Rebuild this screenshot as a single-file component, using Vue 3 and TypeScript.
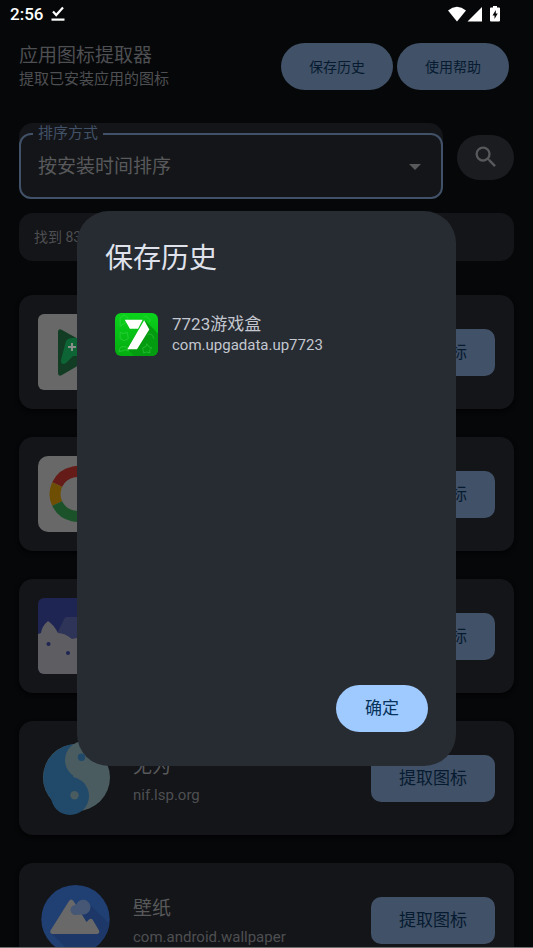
<script setup lang="ts">
import { ref } from 'vue'

interface AppEntry {
  id: number
  name?: string
  pkg?: string
  icon: 'games' | 'google' | 'cat' | 'taiji' | 'wallpaper'
}

const apps: AppEntry[] = [
  { id: 1, icon: 'games' },
  { id: 2, icon: 'google' },
  { id: 3, icon: 'cat' },
  { id: 4, name: '无为', pkg: 'nif.lsp.org', icon: 'taiji' },
  { id: 5, name: '壁纸', pkg: 'com.android.wallpaper', icon: 'wallpaper' },
]

const history = [{ name: '7723游戏盒', pkg: 'com.upgadata.up7723' }]

const sort = ref('time')
const dialogOpen = ref(true)
</script>

<template>
  <div class="screen">
    <div class="status">
      <span class="clock">2:56</span>
      <svg class="done" viewBox="0 0 14 16" aria-hidden="true">
        <path d="M2 5.5 5.2 9 12 1.5" fill="none" stroke="#fff" stroke-width="2.2" />
        <path d="M.5 12.5h13v2.2H.5z" fill="#fff" />
      </svg>
      <svg class="signals" viewBox="0 0 54 16" aria-hidden="true">
        <path d="M1 4.4Q10 -3 19 4.4L10 15.5z" fill="#fff" />
        <path d="M35 1v14.5H20.5z" fill="#fff" />
        <path d="M46 0h4v1.5h2a1 1 0 0 1 1 1v12a1 1 0 0 1-1 1h-8a1 1 0 0 1-1-1v-12a1 1 0 0 1 1-1h2z" fill="#fff" />
        <path d="M48.8 4 45.5 9.4h2V13l3.200-5.4h-1.900z" fill="#060709" />
      </svg>
    </div>

    <header class="header">
      <div class="heading">
        <h1>应用图标提取器</h1>
        <p>提取已安装应用的图标</p>
      </div>
      <div class="actions">
        <button class="pill" type="button" @click="dialogOpen = true">保存历史</button>
        <button class="pill" type="button">使用帮助</button>
      </div>
    </header>

    <main>
      <div class="filter">
        <div class="sort">
          <fieldset>
            <legend><label for="sort">排序方式</label></legend>
            <div class="select-row">
              <select id="sort" v-model="sort">
                <option value="time">按安装时间排序</option>
              </select>
              <svg viewBox="0 0 12 6" aria-hidden="true"><path d="M0 0h12L6 6z" fill="#58595b" /></svg>
            </div>
          </fieldset>
        </div>
        <button class="search" type="button" aria-label="搜索">
          <svg viewBox="0 0 24 24" aria-hidden="true">
            <path
              fill="#58595b"
              d="M15.5 14h-.79l-.28-.27A6.47 6.47 0 0 0 16 9.5 6.5 6.5 0 1 0 9.5 16c1.61 0 3.09-.59 4.23-1.57l.27.28v.79l5 4.99L20.49 19zm-6 0C7.01 14 5 11.99 5 9.5S7.01 5 9.5 5 14 7.01 14 9.5 11.99 14 9.5 14z"
            />
          </svg>
        </button>
      </div>

      <p class="found">找到 83</p>

      <ul class="apps">
        <li v-for="app in apps" :key="app.id" class="card">
          <svg v-if="app.icon === 'games'" class="icon" viewBox="0 0 76 76" aria-hidden="true">
            <rect width="76" height="76" rx="6" fill="#686868" />
            <path d="M20 18q0-4 4-2l36 20q3 2 0 4L24 61q-4 2-4-2z" fill="#123d24" />
            <path d="M28 27q2-3 6-3h16q4 0 6 4l4 18q0 6-5 4l-8-8H35l-7 7q-5 3-5-3z" fill="#0d6536" />
            <path d="M30 33h8M34 29v8" stroke="#8b8f8c" stroke-width="2" />
          </svg>
          <svg v-else-if="app.icon === 'google'" class="icon" viewBox="0 0 76 76" aria-hidden="true">
            <rect width="76" height="76" rx="10" fill="#686868" />
            <g fill="none" stroke-width="11">
              <path d="M19.2 28.5A22.500 22.500 0 0 1 55.500 22" stroke="#651c18" />
              <path d="M19.2 47.5A22.500 22.500 0 0 1 19.2 28.5" stroke="#6d4e03" />
              <path d="M19.2 47.5A22.500 22.500 0 0 0 54 55" stroke="#1c5229" />
              <path d="M54 55a22 22 0 0 0 8-17H40" stroke="#1b3566" />
            </g>
          </svg>
          <svg v-else-if="app.icon === 'cat'" class="icon" viewBox="0 0 76 76" aria-hidden="true">
            <clipPath id="cat-clip"><rect width="76" height="76" rx="6" /></clipPath>
            <g clip-path="url(#cat-clip)">
              <path d="M0 0h76v76H0z" fill="#1f2553" />
              <path d="M18 38 26 21q1-2 3-2h47v57H18z" fill="#2e3358" />
              <path d="M0 36l3-1q1-7 7-12 6 4 10 12 7 0 14 6l5-1h37v36H0z" fill="#5e5d62" />
              <circle cx="10.500" cy="46" r="2" fill="#1f2553" />
              <circle cx="30" cy="55" r="2" fill="#1f2553" />
            </g>
          </svg>
          <svg v-else-if="app.icon === 'taiji'" class="icon" viewBox="0 0 76 76" aria-hidden="true">
            <circle cx="38.500" cy="37.500" r="33.500" fill="#4a5c60" />
            <path d="M40 4A33.500 33.500 0 0 0 14 60L32 60z" fill="#20496a" />
            <circle cx="46" cy="20" r="19" fill="#4a5c60" />
            <circle cx="32" cy="56" r="19" fill="#20496a" />
            <circle cx="43.500" cy="17.300" r="3.700" fill="#20496a" />
            <circle cx="36.500" cy="55.300" r="4.200" fill="#4a5c60" />
          </svg>
          <svg v-else class="icon" viewBox="0 0 76 76" aria-hidden="true">
            <clipPath id="wall-clip"><circle cx="37.500" cy="37.200" r="34.200" /></clipPath>
            <g clip-path="url(#wall-clip)">
              <path d="M0 0h76v76H0z" fill="#203f73" />
              <path d="M50 21 76 46v30H38L14 52z" fill="#1d3868" />
              <path d="M31 19q2-3 4.500 0l13 21 2.500-2.500q2-1.500 3.500 0l6.500 11q1 3-2 3.500H14.500q-3-.5-2-3.500z" fill="#696969" />
              <path d="M37 33a5 5 0 0 1 1-10 7.400 7.400 0 1 1 8 9.500z" fill="#455775" />
            </g>
          </svg>
          <div class="info">
            <h2 v-if="app.name">{{ app.name }}</h2>
            <p v-if="app.pkg">{{ app.pkg }}</p>
          </div>
          <button class="extract" type="button">提取图标</button>
        </li>
      </ul>
    </main>

    <div class="edge"></div>

    <div v-if="dialogOpen" class="overlay">
      <section class="dialog" role="dialog" aria-modal="true" aria-labelledby="dialog-title">
        <h2 id="dialog-title">保存历史</h2>
        <ul class="history">
          <li v-for="item in history" :key="item.pkg">
            <svg viewBox="0 0 42 42" aria-hidden="true">
              <defs>
                <linearGradient id="green" x1="0" y1="0" x2="0" y2="1">
                  <stop offset="0" stop-color="#0bd31c" />
                  <stop offset="1" stop-color="#04ac10" />
                </linearGradient>
                <clipPath id="green-clip"><rect width="42" height="42" rx="6" /></clipPath>
              </defs>
              <g clip-path="url(#green-clip)">
                <path d="M0 0h42v42H0z" fill="url(#green)" />
                <path d="M29 7 42 20v22H19l-7-7z" fill="#049b10" />
                <g fill="none" stroke="#4fdc59" stroke-width=".7" opacity=".6">
                  <path d="M5 5l4-3 4 3-2 4-6 4zM5 19l3 1 4-1 1 6-4 2-4-2zM4 38q0-6 5-5 5 0 4 4l-3-1-3 1z" />
                  <path d="M28 5q2-4 4 0 4 1 1 4M32 21q4-2 6 4M27 34l3-1 1-3 2 3 3 1-2 2v3l-3-1-3 1z" />
                </g>
                <path d="M9.500 6.500H27L22.500 15.500h-8zM28.500 7 33.500 16 21.500 35.500H12z" fill="#fff" />
              </g>
            </svg>
            <div>
              <h3>{{ item.name }}</h3>
              <p>{{ item.pkg }}</p>
            </div>
          </li>
        </ul>
        <button class="confirm" type="button" @click="dialogOpen = false">确定</button>
      </section>
    </div>
  </div>
</template>

<style>
body {
  background: #060709;
  overflow: hidden;
}
</style>

<style scoped>
* {
  box-sizing: border-box;
}

.screen {
  height: 100vh;
  overflow: hidden;
  background: #060709;
  color: #4e4f52;
  font-family: Roboto, 'Noto Sans CJK SC', sans-serif;
}

h1,
h2,
h3,
p,
ul {
  margin: 0;
  padding: 0;
  font-weight: 400;
  list-style: none;
}

button,
select {
  border: 0;
  font-family: inherit;
}

.status {
  display: flex;
  align-items: center;
  gap: 8px;
  height: 28px;
  padding: 0 32px 0 10px;
}

.clock {
  color: #fff;
  font-size: 17px;
  font-weight: 500;
  line-height: 28px;
}

.done {
  width: 14px;
  height: 16px;
}

.signals {
  width: 54px;
  height: 16px;
  margin-left: auto;
}

.header {
  display: flex;
  justify-content: space-between;
  align-items: center;
  padding: 15px 24px 0 19px;
}

h1 {
  font-size: 19px;
  line-height: 26px;
}

.heading p {
  font-size: 15px;
  line-height: 21px;
}

.actions {
  display: flex;
  gap: 4px;
}

.pill {
  height: 47px;
  padding: 0 28px 2px;
  border-radius: 24px;
  background: #415167;
  color: #061b30;
  font-size: 14px;
}

main {
  padding: 33px 19px 0;
}

.filter {
  display: flex;
  align-items: center;
  gap: 14px;
}

.sort {
  flex: 1;
  min-width: 0;
  border-radius: 14px;
  background: #141518;
}

fieldset {
  min-width: 0;
  margin: 0;
  padding: 0 12px 8px;
  border: 2px solid #415167;
  border-radius: 12px;
}

legend {
  padding: 0 5px;
  color: #415167;
  font-size: 15px;
  line-height: 21px;
}

.select-row {
  display: flex;
  align-items: center;
  padding: 0 8px 0 5px;
}

select {
  flex: 1;
  height: 45px;
  padding: 0;
  appearance: none;
  outline: 0;
  background: transparent;
  color: #58595b;
  font-size: 19px;
}

.select-row svg {
  width: 12px;
  height: 6px;
}

.search {
  display: grid;
  place-items: center;
  width: 57px;
  height: 45px;
  margin-bottom: 8px;
  padding: 0;
  border-radius: 23px;
  background: #1b1c20;
}

.search svg {
  width: 28px;
  height: 28px;
}

.found {
  margin-top: 14px;
  padding: 0 15px;
  border-radius: 14px;
  background: #141518;
  font-size: 14px;
  line-height: 48px;
}

.apps {
  display: grid;
  gap: 28px;
  margin-top: 34px;
}

.card {
  display: flex;
  align-items: center;
  gap: 19px;
  padding: 19px;
  border-radius: 14px;
  background: #141518;
  box-shadow: 0 2px 4px #030304;
}

.icon {
  flex: none;
  width: 76px;
  height: 76px;
}

.info {
  flex: 1;
  min-width: 0;
  padding-top: 4px;
  white-space: nowrap;
  overflow: hidden;
}

.info h2 {
  color: #58595b;
  font-size: 19px;
  line-height: 30px;
}

.info p {
  font-size: 15px;
  line-height: 26px;
}

.extract {
  height: 47px;
  padding: 0 28px 4px;
  border-radius: 10px;
  background: #415167;
  color: #061b30;
  font-size: 17px;
}

.edge {
  position: fixed;
  inset: auto 0 0;
  height: 1px;
  background: #6f6f70;
}

.overlay {
  position: fixed;
  inset: 0;
  display: flex;
  align-items: center;
  justify-content: center;
  padding: 29px 77px 0;
}

.dialog {
  display: flex;
  flex: 1;
  flex-direction: column;
  padding: 29px 28px 34px;
  border-radius: 32px;
  background: #272b32;
}

.dialog h2 {
  color: #dfe2ea;
  font-size: 28px;
  line-height: 38px;
}

.history {
  min-height: 351px;
  margin: 28px 0;
}

.history li {
  display: flex;
  align-items: center;
  gap: 14px;
  padding: 7px 10px;
  color: #c3c7cf;
}

.history svg {
  width: 43px;
  height: 43px;
}

.history h3 {
  font-size: 17px;
  line-height: 22px;
}

.history p {
  font-size: 15px;
  line-height: 21px;
}

.confirm {
  align-self: flex-end;
  height: 47px;
  padding: 0 29px 4px;
  border-radius: 24px;
  background: #9fcaff;
  color: #06325b;
  font-size: 17px;
}
</style>
